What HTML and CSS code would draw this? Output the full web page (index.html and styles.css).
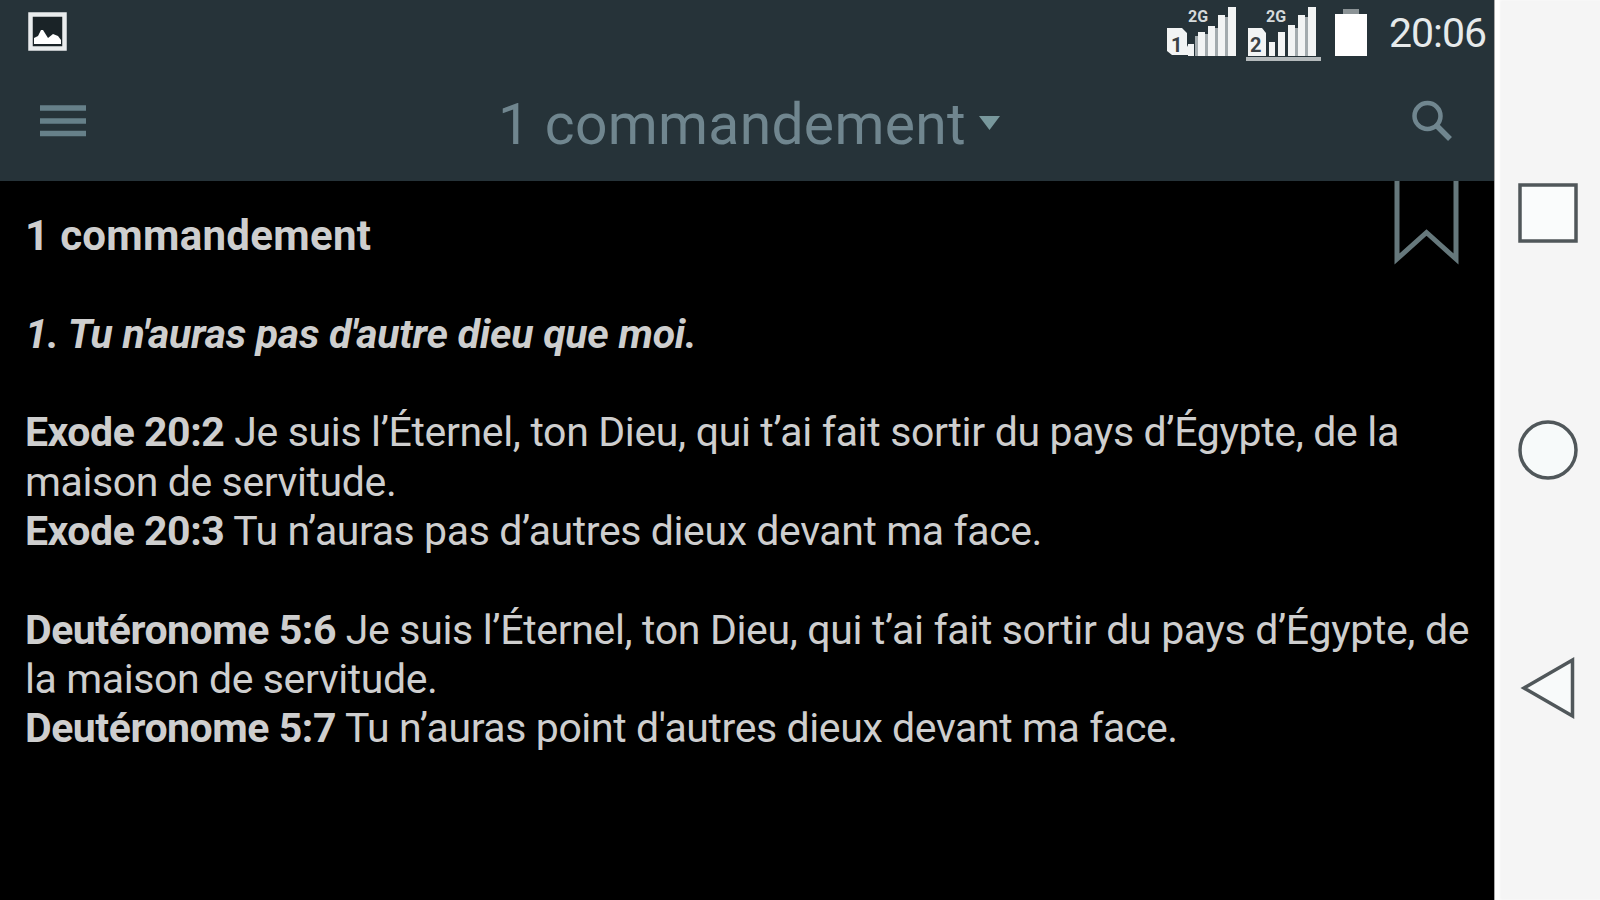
FILE: index.html
```html
<!DOCTYPE html>
<html lang="fr">
<head>
    <meta charset="UTF-8">
    <meta name="viewport" content="width=device-width, initial-scale=1.0">
    <title>1 commandement</title>
    <link rel="stylesheet" href="styles.css">
</head>
<body>
    <div class="screen">
        <header class="header">
            <div class="status-bar">
                <svg class="icon-picture" width="39" height="39" viewBox="0 0 39 39">
                    <rect x="2.500" y="2.500" width="34" height="34" fill="#1a2327" stroke="#e9eced" stroke-width="4.500"/>
                    <path d="M6 32v-6l4-2 3-6h2l5 8 5-4 5 2 3 4v4z" fill="#fff"/>
                </svg>
                <div class="status-right">
                    <svg class="icon-signal" width="156" height="66" viewBox="0 0 156 66">
                        <g fill="#f2f4f4">
                            <path d="M0 28h15l5 5v12l5 10H5l-5-4z"/>
                            <path d="M21 44h6v12h-6zM31 32h7v24h-7zM41 26h7v30h-7zM51 15h7v41h-7zM61 7h8v49h-8z"/>
                            <path d="M81 28h14l4 5v23H81z"/>
                            <path d="M102 42h6v14h-6zM111 32h7v24h-7zM121 25h7v31h-7zM131 15h7v41h-7zM141 7h8v49h-8z"/>
                        </g>
                        <g fill="#a3abae">
                            <path d="M28 36h3v20h-3zM38 34h3v22h-3zM48 28h3v28h-3zM58 17h3v39h-3z"/>
                            <path d="M128 28h3v28h-3zM138 17h3v39h-3z"/>
                        </g>
                        <rect x="79" y="57" width="75" height="4" fill="#b4babc"/>
                        <text class="net" x="21" y="22">2G</text>
                        <text class="net" x="99" y="22">2G</text>
                        <text class="sim" x="4" y="52">1</text>
                        <text class="sim" x="83" y="52">2</text>
                    </svg>
                    <svg class="icon-battery" width="32" height="50" viewBox="0 0 32 50">
                        <rect x="8" y="2" width="16" height="5" fill="#8b9396"/>
                        <rect x="0" y="7" width="32" height="42" fill="#fff"/>
                    </svg>
                    <span class="clock">20:06</span>
                </div>
            </div>
            <div class="toolbar">
                <svg class="icon-menu" width="46" height="32" viewBox="0 0 46 32">
                    <path d="M0 3h46M0 16h46M0 28.500h46" stroke="#668089" stroke-width="5.500"/>
                </svg>
                <div class="title">
                    <h1>1 commandement</h1>
                    <svg width="21" height="14" viewBox="0 0 21 14"><path d="M0 0h21L10.500 14z" fill="#78989c"/></svg>
                </div>
                <svg class="icon-search" width="40" height="42" viewBox="0 0 40 42">
                    <circle cx="15.500" cy="16" r="13" fill="none" stroke="#70868f" stroke-width="4.500"/>
                    <path d="M25 26l13 13" stroke="#70868f" stroke-width="5.500"/>
                </svg>
            </div>
        </header>
        <main class="content">
            <svg class="bookmark" width="66" height="85" viewBox="0 0 66 85">
                <path d="M3 0v78l29.500-26.500L62 78V0" fill="none" stroke="#66787c" stroke-width="5"/>
            </svg>
            <h2>1 commandement</h2>
            <p class="quote">1. Tu n'auras pas d'autre dieu que moi.</p>
            <p><span class="long"><b>Exode 20:2</b> Je suis l’Éternel, ton Dieu, qui t’ai fait sortir du pays d’Égypte, de la</span><br>
            maison de servitude.<br>
            <b>Exode 20:3</b> Tu n’auras pas d’autres dieux devant ma face.</p>
            <p><span class="long"><b>Deutéronome 5:6</b> Je suis l’Éternel, ton Dieu, qui t’ai fait sortir du pays d’Égypte, de</span><br>
            la maison de servitude.<br>
            <b>Deutéronome 5:7</b> Tu n’auras point d'autres dieux devant ma face.</p>
        </main>
    </div>
    <nav class="nav-bar">
        <svg width="60" height="60" viewBox="0 0 60 60"><rect x="2" y="2" width="56" height="56" fill="#fafcfc" stroke="#50575a" stroke-width="3.500"/></svg>
        <svg width="60" height="60" viewBox="0 0 60 60"><circle cx="30" cy="30" r="28" fill="#f7fafa" stroke="#50575a" stroke-width="3.500"/></svg>
        <svg width="60" height="64" viewBox="0 0 60 64"><path d="M6 32L54.500 4v56z" fill="#f8fafa" stroke="#50575a" stroke-width="3.500"/></svg>
    </nav>
</body>
</html>
```

FILE: styles.css
```css
body {
    font-family: Roboto, sans-serif;
    background: #000;
    margin: 0;
    display: flex;
    width: 1600px;
    height: 900px;
    overflow: hidden;
}

svg {
    display: block;
    flex: none;
}

h1, h2, p {
    margin: 0;
}

.screen {
    width: 1494px;
}

.header {
    background: #263339;
    height: 181px;
    color: #fff;
}

.status-bar {
    height: 66px;
    display: flex;
    justify-content: space-between;
    align-items: flex-start;
    padding-left: 28px;
}

.icon-picture {
    margin-top: 12px;
}

.status-right {
    display: flex;
}

.icon-battery {
    margin: 7px 22px 0 12px;
}

.net {
    font-size: 16px;
    font-weight: bold;
    fill: #d5dadb;
}

.sim {
    font-size: 20px;
    font-weight: bold;
    fill: #3a4145;
}

.clock {
    font-size: 41px;
    line-height: 67px;
    letter-spacing: -1px;
    color: #e6eaeb;
    width: 105px;
}

.toolbar {
    height: 115px;
    display: flex;
    align-items: flex-start;
    justify-content: space-between;
    padding: 0 42px 0 40px;
}

.icon-menu {
    margin-top: 39px;
}

.title {
    display: flex;
    gap: 13px;
}

.title h1 {
    font-size: 57px;
    font-weight: normal;
    line-height: 67px;
    letter-spacing: 0.3px;
    margin-top: 25px;
    color: #70868f;
}

.title svg {
    margin-top: 50px;
}

.icon-search {
    margin-top: 34px;
}

.content {
    position: relative;
    padding: 30px 0 0 25px;
    font-size: 41px;
    line-height: 49.35px;
    letter-spacing: -0.4px;
    color: #cecece;
    white-space: nowrap;
}

.content h2 {
    font-size: 42px;
    letter-spacing: 0.3px;
}

.content p {
    margin-top: 49.35px;
}

.content b {
    letter-spacing: -0.46px;
}

.content .quote {
    font-weight: bold;
    font-style: italic;
    letter-spacing: -0.24px;
}

.long {
    letter-spacing: -0.34px;
}

/* hangs from the toolbar over the text */
.bookmark {
    position: absolute;
    top: 0;
    right: 34px;
}

.nav-bar {
    box-sizing: border-box;
    width: 106px;
    background: #f5f5f5;
    border-left: 1px solid #a9a9a9;
    box-shadow: inset 5px 0 2px #fff;
    display: flex;
    flex-direction: column;
    align-items: center;
    justify-content: space-between;
    padding: 183px 0 180px;
}
```
